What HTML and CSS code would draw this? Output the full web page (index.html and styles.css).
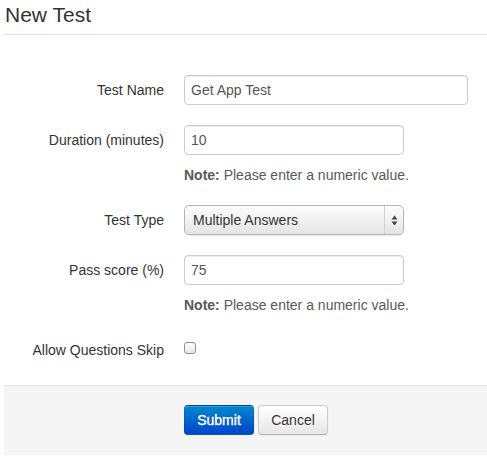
FILE: index.html
```html
<!DOCTYPE html>
<html>
<head>
<meta charset="utf-8">
<link rel="stylesheet" href="styles.css">
</head>
<body>
<form class="form">
  <div class="legend">New Test</div>
  <div class="fields">
    <div class="group">
      <label class="label">Test Name</label>
      <div class="controls">
        <input class="input input-xl" type="text" value="Get App Test">
      </div>
    </div>
    <div class="group">
      <label class="label">Duration (minutes)</label>
      <div class="controls">
        <input class="input" type="text" value="10">
        <p class="help"><strong>Note:</strong> Please enter a numeric value.</p>
      </div>
    </div>
    <div class="group">
      <label class="label">Test Type</label>
      <div class="controls">
        <span class="select-wrap">
          <select class="select"><option>Multiple Answers</option></select>
          <span class="select-arrows">
            <svg width="7" height="11" viewBox="0 0 7 11"><path d="M3.5 0.5 L6.5 4.5 L0.5 4.5 Z" fill="#444"/><path d="M3.5 10.5 L6.5 6.5 L0.5 6.5 Z" fill="#444"/></svg>
          </span>
        </span>
      </div>
    </div>
    <div class="group">
      <label class="label">Pass score (%)</label>
      <div class="controls">
        <input class="input" type="text" value="75">
        <p class="help"><strong>Note:</strong> Please enter a numeric value.</p>
      </div>
    </div>
    <div class="group group-last">
      <label class="label">Allow Questions Skip</label>
      <div class="controls controls-check">
        <input class="check" type="checkbox">
      </div>
    </div>
  </div>
  <div class="actions">
    <button type="button" class="btn btn-primary">Submit</button>
    <button type="button" class="btn">Cancel</button>
  </div>
</form>
</body>
</html>
```

FILE: styles.css
```css
html, body {
  margin: 0;
  padding: 0;
  background: #fff;
}
body {
  font-family: "Liberation Sans", Arial, Helvetica, sans-serif;
  font-size: 14px;
  line-height: 20px;
  color: #333;
}
.form {
  margin: 0 0 0 4px;
}
.legend {
  font-size: 21px;
  line-height: 24px;
  padding: 3px 0 7px 1px;
  border-bottom: 1px solid #e5e5e5;
  color: #333;
}
.fields {
  padding-top: 40px;
}
.group {
  display: grid;
  grid-template-columns: 160px 1fr;
  column-gap: 20px;
  margin-bottom: 20px;
}
.label {
  text-align: right;
  padding-top: 5px;
  line-height: 20px;
}
.controls {
  min-width: 0;
}
.input {
  display: block;
  box-sizing: content-box;
  width: 206px;
  height: 20px;
  padding: 4px 6px;
  margin: 0;
  font-family: inherit;
  font-size: 14px;
  line-height: 20px;
  color: #555;
  background: #fff;
  border: 1px solid #ccc;
  border-radius: 4px;
  box-shadow: inset 0 1px 1px rgba(0, 0, 0, 0.075);
  outline: none;
}
.input-xl {
  width: 270px;
}
.help {
  margin: 10px 0 0;
  color: #595959;
  line-height: 20px;
}
.help strong {
  font-weight: bold;
}
.select-wrap {
  position: relative;
  display: block;
  width: 220px;
  height: 30px;
}
.select {
  -webkit-appearance: none;
  appearance: none;
  display: block;
  box-sizing: border-box;
  width: 220px;
  height: 30px;
  margin: 0;
  padding: 0 24px 0 8px;
  font-family: inherit;
  font-size: 14px;
  color: #333;
  border: 1px solid #b4b4b4;
  border-radius: 5px;
  background: linear-gradient(#fdfdfd 0%, #f1f1f1 50%, #e4e4e4 100%);
  box-shadow: 0 1px 1px rgba(0, 0, 0, 0.08);
  outline: none;
}
.select-arrows {
  position: absolute;
  top: 1px;
  right: 1px;
  bottom: 1px;
  width: 18px;
  border-left: 1px solid #cfcfcf;
  display: flex;
  align-items: center;
  justify-content: center;
  pointer-events: none;
}
.controls-check {
  padding-top: 7px;
  height: 23px;
}
.check {
  -webkit-appearance: none;
  appearance: none;
  display: block;
  box-sizing: border-box;
  width: 12px;
  height: 12px;
  margin: 0;
  border: 1px solid #8f8f8f;
  border-radius: 3px;
  background: linear-gradient(#ffffff, #e6e6e6);
  box-shadow: inset 0 1px 0 #fff;
}
.actions {
  border-top: 1px solid #e5e5e5;
  background: #f5f5f5;
  padding: 19px 20px 20px 180px;
  display: flex;
  gap: 4px;
}
.btn {
  box-sizing: border-box;
  width: 70px;
  height: 30px;
  padding: 4px 0;
  margin: 0;
  font-family: inherit;
  font-size: 14px;
  line-height: 20px;
  color: #333;
  text-align: center;
  text-shadow: 0 1px 1px rgba(255, 255, 255, 0.75);
  background: linear-gradient(#ffffff, #e6e6e6);
  border: 1px solid #cccccc;
  border-bottom-color: #b3b3b3;
  border-radius: 4px;
  box-shadow: inset 0 1px 0 rgba(255, 255, 255, 0.2), 0 1px 2px rgba(0, 0, 0, 0.05);
  cursor: pointer;
}
.btn-primary {
  color: #fff;
  text-shadow: 0 -1px 0 rgba(0, 0, 0, 0.25);
  -webkit-text-stroke: 0.35px #fff;
  background: linear-gradient(#0088cc, #0044cc);
  border-color: rgba(0, 0, 0, 0.1) rgba(0, 0, 0, 0.1) rgba(0, 0, 0, 0.25);
}
```
